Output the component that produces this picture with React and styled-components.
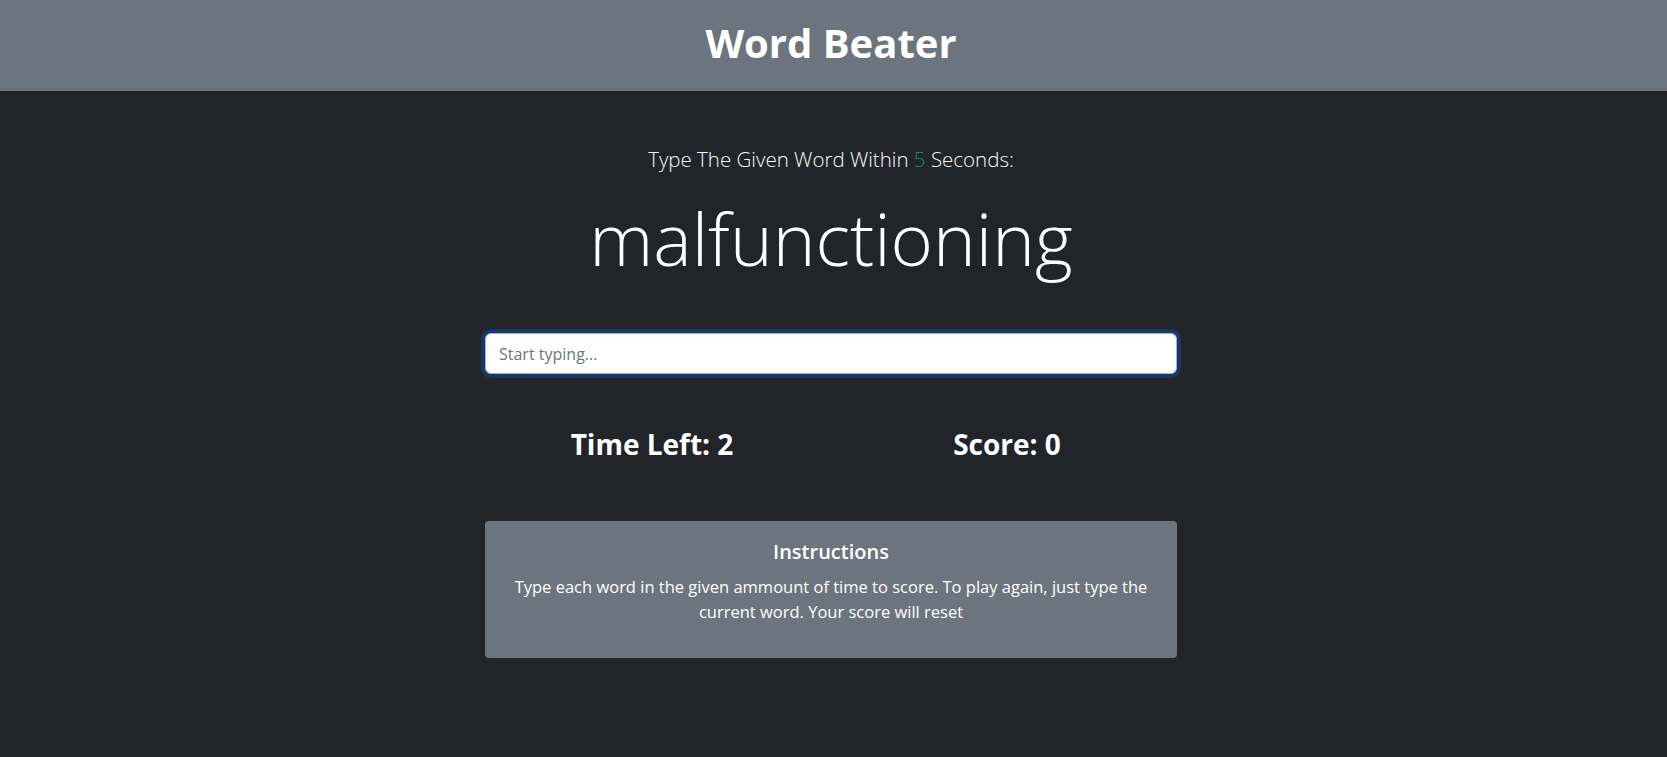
import React from 'react';
import styled, { createGlobalStyle } from 'styled-components';

const GlobalStyle = createGlobalStyle`
  html, body {
    margin: 0;
    padding: 0;
    background: #212529;
    font-family: "Open Sans", "Noto Sans", sans-serif;
    color: #fff;
  }
`;

const Header = styled.header`
  height: 91px;
  background: #6c757d;
  display: flex;
  align-items: center;
  justify-content: center;
  padding: 0 5px 6px 0;
  box-sizing: border-box;
`;

const Title = styled.h1`
  margin: 0;
  font-size: 40px;
  font-weight: 700;
  color: #fff;
`;

const Page = styled.div`
  padding-right: 5px;
`;

const Main = styled.main`
  width: 692px;
  margin: 0 auto;
  display: flex;
  flex-direction: column;
  align-items: stretch;
  text-align: center;
`;

const Lead = styled.p`
  margin: 53px 0 0;
  font-size: 20.5px;
  font-weight: 300;
  line-height: 30px;
  color: #f8f9fa;
`;

const Seconds = styled.span`
  color: #198754;
`;

const Word = styled.h2`
  margin: 18px 0 0;
  font-size: 72.5px;
  font-weight: 300;
  line-height: 92px;
  color: #fff;
`;

const Input = styled.input`
  box-sizing: border-box;
  margin: 49px 0 0;
  height: 41px;
  width: 100%;
  padding: 6px 13px;
  font-family: inherit;
  font-size: 16px;
  color: #212529;
  background: #fff;
  border: 1px solid #86b7fe;
  border-radius: 6px;
  box-shadow: 0 0 0 4px rgba(13, 110, 253, 0.25);
  outline: none;
  &::placeholder {
    color: #6c757d;
  }
`;

const Stats = styled.div`
  margin-top: 50px;
  display: grid;
  grid-template-columns: 1fr 1fr;
`;

const Stat = styled.h3`
  margin: 0;
  font-size: 28px;
  font-weight: 700;
  line-height: 40px;
  color: #fff;
  padding-right: ${p => p.$shift || 0}px;
  padding-left: ${p => p.$push || 0}px;
`;

const Card = styled.div`
  margin-top: 57px;
  background: #6c757d;
  border-radius: 4px;
  padding: 16px 18px 32px;
  min-height: 137px;
  box-sizing: border-box;
`;

const CardTitle = styled.h5`
  margin: 0;
  font-size: 20px;
  font-weight: 600;
  line-height: 30px;
  color: #fff;
`;

const CardText = styled.p`
  margin: 7px 0 0;
  font-size: 16.5px;
  line-height: 25px;
  color: #fff;
`;

export default function App() {
  return (
    <>
      <GlobalStyle />
      <Header>
        <Title>Word Beater</Title>
      </Header>
      <Page>
        <Main>
          <Lead>
            Type The Given Word Within <Seconds>5</Seconds> Seconds:
          </Lead>
          <Word>malfunctioning</Word>
          <Input placeholder="Start typing..." />
          <Stats>
            <Stat $shift={12}>Time Left: 2</Stat>
            <Stat $push={6}>Score: 0</Stat>
          </Stats>
          <Card>
            <CardTitle>Instructions</CardTitle>
            <CardText>
              Type each word in the given ammount of time to score. To play again, just type the current word. Your score will reset
            </CardText>
          </Card>
        </Main>
      </Page>
    </>
  );
}
